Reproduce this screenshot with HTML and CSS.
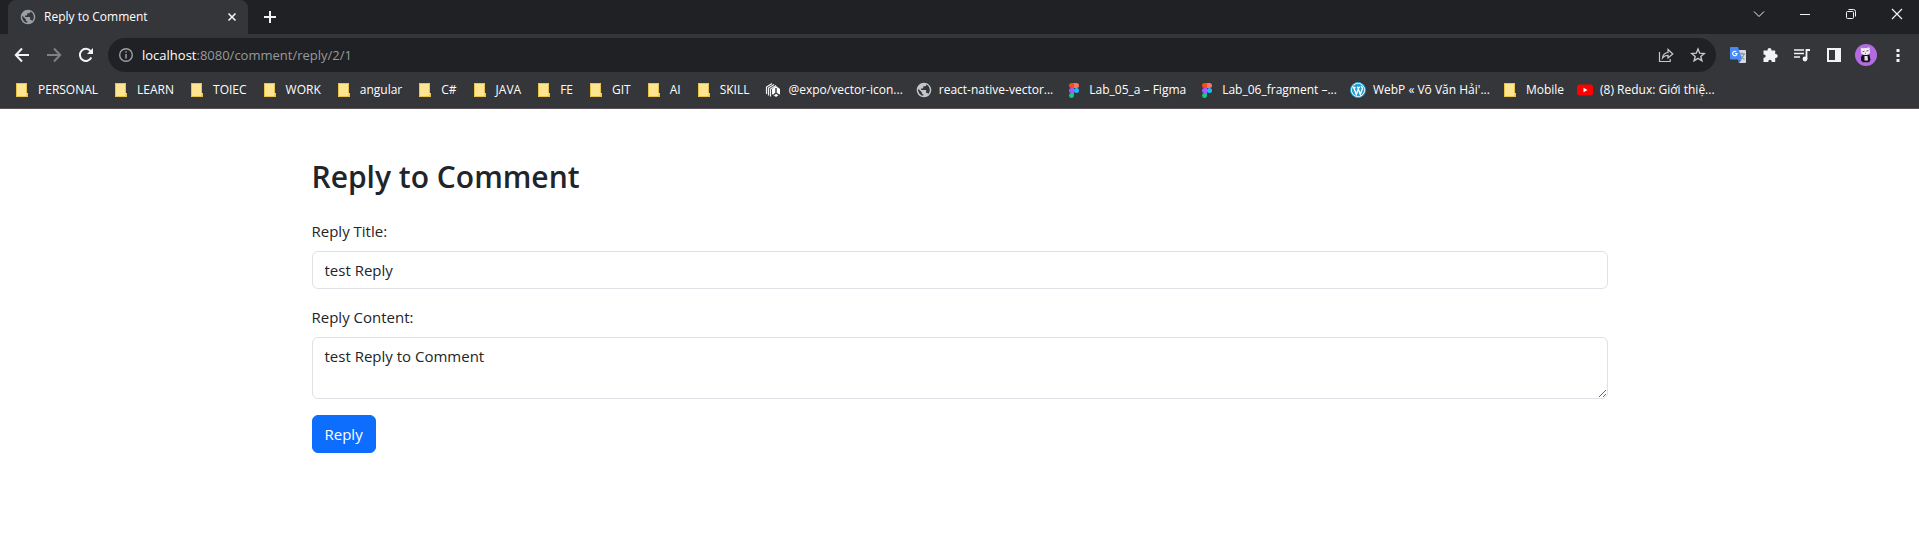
FILE: index.html
```html
<!DOCTYPE html>
<html lang="en">
<head>
<meta charset="utf-8">
<title>Reply to Comment</title>
<link rel="stylesheet" href="styles.css">
</head>
<body>
<svg class="defs" aria-hidden="true">
  <symbol id="globe" viewBox="1 1 22 22"><path d="M12 2C6.480 2 2 6.480 2 12s4.480 10 10 10 10-4.480 10-10S17.520 2 12 2zm-1 17.930c-3.950-.49-7-3.850-7-7.930 0-.62.08-1.210.21-1.790L9 15v1c0 1.100.9 2 2 2v1.930zm6.900-2.540c-.26-.81-1-1.390-1.900-1.390h-1v-3c0-.55-.45-1-1-1H8v-2h2c.55 0 1-.45 1-1V7h2c1.100 0 2-.9 2-2v-.41c2.930 1.190 5 4.060 5 7.410 0 2.080-.8 3.970-2.100 5.390z" fill="currentColor"/></symbol>
  <symbol id="folder" viewBox="0 0 16 16"><path d="M1 1h11v10h1v4H1z" fill="#ffe592"/><path d="M1.500 1v13.500H12V11.500h.5V15M1 1.500h10.500V11" fill="none" stroke="#e9c348"/></symbol>
  <symbol id="figma" viewBox="0 0 16 16"><path d="M5.500 1H8v5H5.500a2.500 2.500 0 0 1 0-5z" fill="#f24e1e"/><path d="M8 1h2.500a2.500 2.500 0 0 1 0 5H8z" fill="#ff7262"/><path d="M5.500 6H8v5H5.500a2.500 2.500 0 0 1 0-5z" fill="#a259ff"/><circle cx="10.500" cy="8.500" r="2.500" fill="#1abcfe"/><path d="M5.500 11H8v2.200a2.500 2.500 0 1 1-2.500-2.200z" fill="#0acf83"/></symbol>
</svg>
<header class="browser">
  <div class="tabstrip">
    <div class="tab">
      <svg class="icon muted"><use href="#globe"/></svg>
      <span class="tab-title">Reply to Comment</span>
      <button class="tool small" aria-label="Close tab"><svg class="icon" viewBox="0 0 16 16"><path d="M4.500 4.500l7 7M11.500 4.500l-7 7" fill="none" stroke="currentColor" stroke-width="1.600"/></svg></button>
    </div>
    <button class="tool new-tab" aria-label="New tab"><svg class="icon" viewBox="0 0 16 16"><path d="M8 2v12M2 8h12" stroke="currentColor" stroke-width="2"/></svg></button>
    <div class="window-buttons">
      <button class="tool" aria-label="Search tabs"><svg class="icon" viewBox="0 0 16 16"><path d="M3 5.500l5 5 5-5" fill="none" stroke="currentColor"/></svg></button>
      <button class="tool" aria-label="Minimize"><svg class="icon" viewBox="0 0 16 16"><path d="M3 8.500h10" stroke="currentColor"/></svg></button>
      <button class="tool" aria-label="Restore"><svg class="icon" viewBox="0 0 16 16"><rect x="3.500" y="5.500" width="7" height="7" rx="1" fill="none" stroke="currentColor"/><path d="M5.500 3.500h5a2 2 0 0 1 2 2v5" fill="none" stroke="currentColor"/></svg></button>
      <button class="tool" aria-label="Close"><svg class="icon" viewBox="0 0 16 16"><path d="M3 3l10 10M13 3L3 13" stroke="currentColor" stroke-width="1.200"/></svg></button>
    </div>
  </div>
  <div class="toolbar">
    <button class="tool" aria-label="Back"><svg class="icon" viewBox="0 0 16 16"><path d="M15 8H2M8 1.500L1.800 8 8 14.500" fill="none" stroke="currentColor" stroke-width="2"/></svg></button>
    <button class="tool dim" aria-label="Forward"><svg class="icon" viewBox="0 0 16 16"><path d="M1 8h13M8 1.500L14.200 8 8 14.500" fill="none" stroke="currentColor" stroke-width="2"/></svg></button>
    <button class="tool" aria-label="Reload"><svg class="icon" viewBox="0 0 16 16"><path d="M13.300 10.500A6 6 0 1 1 12.500 4" fill="none" stroke="currentColor" stroke-width="2"/><path d="M15 1v6H9z" fill="currentColor"/></svg></button>
    <div class="address">
      <svg class="icon muted" viewBox="0 0 16 16"><circle cx="8" cy="8" r="6.300" fill="none" stroke="currentColor" stroke-width="1.400"/><path d="M8 7v4.500M8 4.300v1.500" stroke="currentColor" stroke-width="1.500"/></svg>
      <span class="url"><b>localhost</b>:8080/comment/reply/2/1</span>
      <button class="tool soft" aria-label="Share"><svg class="icon" viewBox="0 0 16 16"><path d="M1.500 5v9.500h10.700V12M4.500 11c.4-3.500 2.200-5.300 5.500-5.500V2.500L14.800 7 10 11V8.300c-2.500 0-4.200.9-5.500 2.700z" fill="none" stroke="currentColor" stroke-width="1.200"/></svg></button>
      <button class="tool soft" aria-label="Bookmark"><svg class="icon" viewBox="0 0 16 16"><path d="M8 2l1.700 4.200 4.600.3-3.500 2.900 1.100 4.400L8 11.400l-3.900 2.400 1.100-4.400-3.500-2.900 4.600-.3z" fill="none" stroke="currentColor" stroke-width="1.400"/></svg></button>
    </div>
    <div class="extensions">
      <button class="tool" aria-label="Translate"><svg class="icon" viewBox="0 0 16 16"><path d="M6 3h9a1 1 0 0 1 1 1v11a1 1 0 0 1-1 1H9z" fill="#d8dadc"/><path d="M9 7h6M12 5.500V7M10 12c2-1 3.500-2.500 4-5M10.500 8.500c.8 1.800 2 3 4 3.800" fill="none" stroke="#688a9a"/><path d="M8 12.500h3.500L9 16z" fill="#3267d6"/><path d="M1 0h7l4 12.500H1a1 1 0 0 1-1-1V1a1 1 0 0 1 1-1z" fill="#4a8af4"/><path d="M6.300 4.900A2.200 2.200 0 1 0 7 6.500H4.800" fill="none" stroke="#fff" stroke-width="1.100"/></svg></button>
      <button class="tool" aria-label="Extensions"><svg class="icon" viewBox="0 0 16 16"><path d="M1.500 3.500h4V3a2 2 0 0 1 4 0v.5h3.700V7h.5a2 2 0 0 1 0 4h-.5v4H9.700v-.6a1.700 1.700 0 0 0-3.400 0v.6H1.500v-4.200H2a1.700 1.700 0 0 0 0-3.400h-.5z" fill="currentColor"/></svg></button>
      <button class="tool" aria-label="Media controls"><svg class="icon" viewBox="0 0 16 16"><path d="M0 3h10M0 6.500h10M0 10h6" stroke="currentColor" stroke-width="1.500"/><path d="M12.500 12V3H16" fill="none" stroke="currentColor" stroke-width="1.800"/><circle cx="11" cy="12" r="2.400" fill="currentColor"/></svg></button>
      <button class="tool" aria-label="Side panel"><svg class="icon" viewBox="0 0 16 16"><path d="M1 1h14v14H1zM3 3v10h6V3z" fill="currentColor" fill-rule="evenodd"/></svg></button>
      <button class="tool" aria-label="Profile"><svg class="avatar" viewBox="0 0 22 22"><circle cx="11" cy="11" r="11" fill="#b56be0"/><path d="M7.500 10.500L6 13v3.500l2 1.800h6l1.500-2.300-1-5.500z" fill="#16131a"/><path d="M9.500 12h3l.5 4.500h-3.500z" fill="#e5dfe9"/><circle cx="7" cy="5" r="1.300" fill="#e5dfe9"/><circle cx="13.500" cy="4.500" r="1.300" fill="#e5dfe9"/><ellipse cx="10.500" cy="7.500" rx="4.500" ry="3.500" fill="#f3eef5"/><path d="M7.500 7.800l2-.6M11.500 7l2-.4M10 9.200h1" stroke="#5c5362"/></svg></button>
      <button class="tool" aria-label="Menu"><svg class="icon" viewBox="0 0 16 16"><path d="M6.500 2h3v3h-3zM6.500 7h3v3h-3zM6.500 12h3v3h-3z" fill="currentColor"/></svg></button>
    </div>
  </div>
  <nav class="bookmarks" aria-label="Bookmarks">
    <div class="folders">
      <a href="#"><svg class="icon"><use href="#folder"/></svg>PERSONAL</a>
      <a href="#"><svg class="icon"><use href="#folder"/></svg>LEARN</a>
      <a href="#"><svg class="icon"><use href="#folder"/></svg>TOIEC</a>
      <a href="#"><svg class="icon"><use href="#folder"/></svg>WORK</a>
      <a href="#"><svg class="icon"><use href="#folder"/></svg>angular</a>
      <a href="#"><svg class="icon"><use href="#folder"/></svg>C#</a>
      <a href="#"><svg class="icon"><use href="#folder"/></svg>JAVA</a>
      <a href="#"><svg class="icon"><use href="#folder"/></svg>FE</a>
      <a href="#"><svg class="icon"><use href="#folder"/></svg>GIT</a>
      <a href="#"><svg class="icon"><use href="#folder"/></svg>AI</a>
      <a href="#"><svg class="icon"><use href="#folder"/></svg>SKILL</a>
    </div>
    <div class="pages">
      <a href="#"><svg class="icon" viewBox="0 0 16 16"><path d="M1.500 12V5L7 1.500M3.500 13.500V6L9 2.500M5.500 14.500V7L11 3.500" fill="none" stroke="#f1f1f1" stroke-width="1.200"/><path d="M11 4l4 3v5l-4 3-4-3V7z" fill="#fff"/><path d="M11 6v5l-2.500 2M11 11l3 2" fill="none" stroke="#35363a" stroke-width="1.400"/></svg>@expo/vector-icon...</a>
      <a href="#"><svg class="icon pale"><use href="#globe"/></svg>react-native-vector...</a>
      <a href="#"><svg class="icon"><use href="#figma"/></svg>Lab_05_a – Figma</a>
      <a href="#"><svg class="icon"><use href="#figma"/></svg>Lab_06_fragment –...</a>
      <a href="#"><svg class="icon" viewBox="0 0 16 16"><circle cx="8" cy="8" r="7.500" fill="#fff" stroke="#20a0ce"/><circle cx="8" cy="8" r="6.200" fill="#20a0ce"/><path d="M2.500 5.500h3M7 5.500h3M3.700 5.500l2.600 7L8.300 7l2 5.500 2.300-6.500-1.500-2" fill="none" stroke="#fff" stroke-width="1.300"/></svg>WebP « Võ Văn Hải'...</a>
      <a href="#"><svg class="icon"><use href="#folder"/></svg>Mobile</a>
      <a href="#"><svg class="icon" viewBox="0 0 16 16"><rect y="2.500" width="16" height="11" rx="2.500" fill="#f00"/><path d="M6.500 5.700v4.600l4-2.300z" fill="#fff"/></svg>(8) Redux: Giới thiệ...</a>
    </div>
  </nav>
</header>
<main class="container">
  <h1>Reply to Comment</h1>
  <form>
    <div class="field">
      <label for="title">Reply Title:</label>
      <input id="title" type="text" value="test Reply">
    </div>
    <div class="field">
      <label for="content">Reply Content:</label>
      <textarea id="content" rows="2">test Reply to Comment</textarea>
    </div>
    <button class="submit" type="button">Reply</button>
  </form>
</main>
</body>
</html>
```
FILE: styles.css
```css
* { box-sizing: border-box; }
body {
  margin: 0;
  background: #fff;
  color: #212529;
  font: 15px/24px "Open Sans", "Noto Sans", sans-serif;
}
.defs { position: absolute; width: 0; height: 0; }
.browser {
  background: #35363a;
  border-bottom: 1px solid #5b5458;
  color: #fff;
  font-size: 12px;
  line-height: 16px;
}
.icon { width: 16px; height: 16px; flex: none; display: block; }
.avatar { width: 22px; height: 22px; display: block; }
.muted { color: #9aa0a6; }
.pale { color: #c4c7ca; }
.tool {
  display: flex;
  align-items: center;
  justify-content: center;
  width: 32px;
  height: 32px;
  padding: 0;
  border: 0;
  background: none;
  color: #f1f3f4;
}
.tool.small { width: 16px; height: 16px; }
.tool.dim { color: #808184; }
.tool.soft { color: #c6c8ca; }
.tabstrip { display: flex; align-items: center; height: 34px; padding-left: 8px; background: #202124; }
.tab {
  display: flex;
  align-items: center;
  gap: 8px;
  width: 240px;
  height: 34px;
  padding: 0 8px 0 12px;
  border-radius: 8px 8px 0 0;
  background: #35363a;
}
.tab-title { flex: 1; }
.new-tab { margin-left: 6px; }
.window-buttons { display: flex; gap: 14px; height: 28px; align-items: center; align-self: flex-start; margin-left: auto; padding-right: 6px; }
.toolbar { display: flex; align-items: center; height: 42px; padding: 0 5px 0 6px; }
.address {
  display: flex;
  align-items: center;
  flex: 1;
  height: 34px;
  margin-left: 6px;
  padding: 0 2px 0 10px;
  border-radius: 17px;
  background: #202124;
}
.url { flex: 1; padding-left: 8px; color: #969a9e; font-size: 13px; line-height: 20px; }
.url b { color: #fff; font-weight: 400; }
.extensions { display: flex; padding-left: 6px; }
.bookmarks { display: flex; align-items: center; gap: 16px; height: 32px; padding: 0 15px 4px; white-space: nowrap; }
.folders, .pages { display: flex; align-items: center; gap: 16px; }
.pages { gap: 13px; }
.bookmarks a { display: flex; align-items: center; gap: 7px; color: #fff; text-decoration: none; }
.container { max-width: 1320px; margin: 48px auto 0; padding: 0 12px; }
h1 { margin: 0 0 22px; font-size: 30px; line-height: 40px; font-weight: 600; }
.field { margin-bottom: 16px; }
label { display: block; margin-bottom: 8px; }
input, textarea {
  display: block;
  width: 100%;
  padding: 6px 12px;
  border: 1px solid #dee2e6;
  border-radius: 6px;
  background: #fff;
  color: inherit;
  font: inherit;
}
input { height: 38px; }
textarea { height: 62px; resize: vertical; }
.submit {
  padding: 6px 12px;
  border: 1px solid #0d6efd;
  border-radius: 6px;
  background: #0d6efd;
  color: #fff;
  font: inherit;
}
```
